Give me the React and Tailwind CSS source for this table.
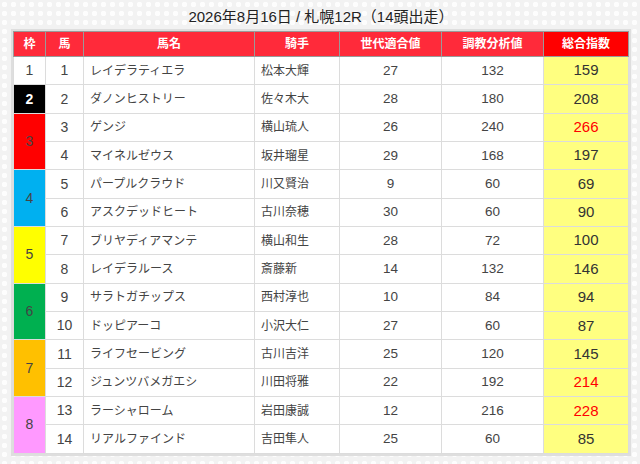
const ROWS = [
  { waku: 1, span: 1, uma: 1, name: 'レイデラティエラ', jockey: '松本大輝', sedai: 27, chokyo: 132, total: 159 },
  { waku: 2, span: 1, uma: 2, name: 'ダノンヒストリー', jockey: '佐々木大', sedai: 28, chokyo: 180, total: 208 },
  { waku: 3, span: 2, uma: 3, name: 'ゲンジ', jockey: '横山琉人', sedai: 26, chokyo: 240, total: 266, hot: true },
  { uma: 4, name: 'マイネルゼウス', jockey: '坂井瑠星', sedai: 29, chokyo: 168, total: 197 },
  { waku: 4, span: 2, uma: 5, name: 'パープルクラウド', jockey: '川又賢治', sedai: 9, chokyo: 60, total: 69 },
  { uma: 6, name: 'アスクデッドヒート', jockey: '古川奈穂', sedai: 30, chokyo: 60, total: 90 },
  { waku: 5, span: 2, uma: 7, name: 'ブリヤディアマンテ', jockey: '横山和生', sedai: 28, chokyo: 72, total: 100 },
  { uma: 8, name: 'レイデラルース', jockey: '斎藤新', sedai: 14, chokyo: 132, total: 146 },
  { waku: 6, span: 2, uma: 9, name: 'サラトガチップス', jockey: '西村淳也', sedai: 10, chokyo: 84, total: 94 },
  { uma: 10, name: 'ドッピアーコ', jockey: '小沢大仁', sedai: 27, chokyo: 60, total: 87 },
  { waku: 7, span: 2, uma: 11, name: 'ライフセービング', jockey: '古川吉洋', sedai: 25, chokyo: 120, total: 145 },
  { uma: 12, name: 'ジュンツバメガエシ', jockey: '川田将雅', sedai: 22, chokyo: 192, total: 214, hot: true },
  { waku: 8, span: 2, uma: 13, name: 'ラーシャローム', jockey: '岩田康誠', sedai: 12, chokyo: 216, total: 228, hot: true },
  { uma: 14, name: 'リアルファインド', jockey: '吉田隼人', sedai: 25, chokyo: 60, total: 85 },
];

const WAKU_STYLE = {
  1: 'bg-white text-[#444]',
  2: 'bg-black text-white font-bold',
  3: 'bg-[#ff0000] text-[#444]',
  4: 'bg-[#00b0f0] text-[#444]',
  5: 'bg-[#ffff00] text-[#444]',
  6: 'bg-[#00b050] text-[#444]',
  7: 'bg-[#ffc000] text-[#444]',
  8: 'bg-[#ff99ff] text-[#444]',
};

const HEAD = ['枠', '馬', '馬名', '騎手', '世代適合値', '調教分析値'];

const App = () => {
  return (
    <div
      className="w-[640px] h-[464px] overflow-hidden bg-[#f2f2f2] bg-[radial-gradient(circle,rgba(255,255,255,0.85)_2.5px,transparent_3px)] bg-[length:9px_9px] pt-[6px] px-[13px] text-[#444]"
      style={{ fontFamily: '"Liberation Sans", "Noto Sans CJK JP", sans-serif' }}
    >
      <h1 className="text-center text-[15px] leading-[21px] text-[#222] font-normal mb-[4px] pl-[2px]">
        2026年8月16日 / 札幌12R（14頭出走）
      </h1>

      <table className="w-[615px] border-collapse table-fixed bg-white outline-2 outline-[#dedede]">
        <colgroup>
          <col className="w-[32px]" />
          <col className="w-[38px]" />
          <col className="w-[171px]" />
          <col className="w-[85px]" />
          <col className="w-[102px]" />
          <col className="w-[102px]" />
          <col className="w-[85px]" />
        </colgroup>
        <thead>
          <tr className="h-[25px]">
            {HEAD.map((h) => (
              <th
                key={h}
                className="bg-[#ff2a3a] text-white text-[12px] font-bold border border-[#9a9a9a] p-0 leading-none"
              >
                {h}
              </th>
            ))}
            <th className="bg-[#ff0000] text-white text-[12px] font-bold border border-[#9a9a9a] p-0 leading-none">
              総合指数
            </th>
          </tr>
        </thead>
        <tbody>
          {ROWS.map((r) => (
            <tr key={r.uma} className="h-[28.35px]">
              {r.waku && (
                <td
                  rowSpan={r.span}
                  className={`${WAKU_STYLE[r.waku]} border border-[#dcdcdc] text-center text-[14px] p-0`}
                >
                  {r.waku}
                </td>
              )}
              <td className="border border-[#dcdcdc] text-center text-[14px] p-0">{r.uma}</td>
              <td className="border border-[#dcdcdc] text-[12px] pl-[6px] p-0 whitespace-nowrap">{r.name}</td>
              <td className="border border-[#dcdcdc] text-[12px] pl-[6px] p-0 whitespace-nowrap">{r.jockey}</td>
              <td className="border border-[#dcdcdc] text-center text-[13.5px] p-0">{r.sedai}</td>
              <td className="border border-[#dcdcdc] text-center text-[13.5px] p-0">{r.chokyo}</td>
              <td
                className={`border border-[#dcdcdc] bg-[#ffff80] text-center text-[15px] font-normal p-0 ${
                  r.hot ? 'text-[#ff0000]' : 'text-[#333]'
                }`}
              >
                {r.total}
              </td>
            </tr>
          ))}
        </tbody>
      </table>
    </div>
  );
};

export default App;
